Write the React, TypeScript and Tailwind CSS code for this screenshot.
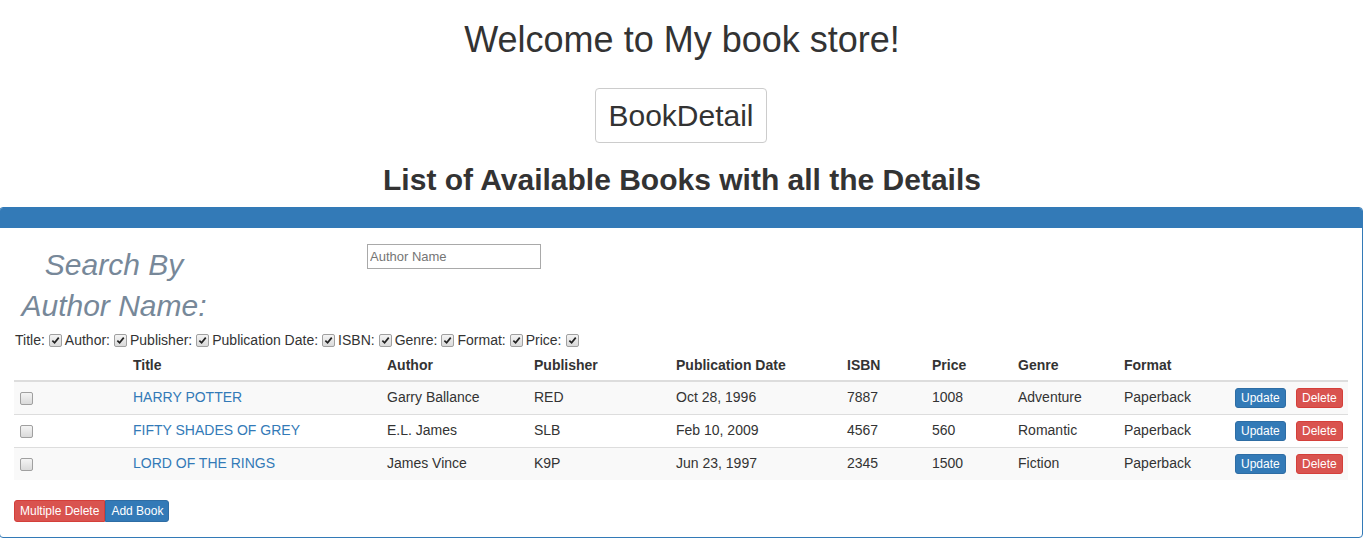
import React from 'react';

type Book = {
  title: string;
  author: string;
  publisher: string;
  date: string;
  isbn: string;
  price: string;
  genre: string;
  format: string;
};

const books: Book[] = [
  { title: 'HARRY POTTER', author: 'Garry Ballance', publisher: 'RED', date: 'Oct 28, 1996', isbn: '7887', price: '1008', genre: 'Adventure', format: 'Paperback' },
  { title: 'FIFTY SHADES OF GREY', author: 'E.L. James', publisher: 'SLB', date: 'Feb 10, 2009', isbn: '4567', price: '560', genre: 'Romantic', format: 'Paperback' },
  { title: 'LORD OF THE RINGS', author: 'James Vince', publisher: 'K9P', date: 'Jun 23, 1997', isbn: '2345', price: '1500', genre: 'Fiction', format: 'Paperback' },
];

const toggles = ['Title', 'Author', 'Publisher', 'Publication Date', 'ISBN', 'Genre', 'Format', 'Price'];
const headers = ['Title', 'Author', 'Publisher', 'Publication Date', 'ISBN', 'Price', 'Genre', 'Format'];

const Box: React.FC<{ checked?: boolean; className?: string }> = ({ checked, className }) => (
  <span className={"inline-flex shrink-0 items-center justify-center w-[13px] h-[13px] border border-[#a0a0a0] rounded-[2px] bg-gradient-to-b from-[#f4f4f4] to-[#dadada] " + (className || '')}>
    {checked && (
      <svg viewBox="0 0 10 10" className="w-[9px] h-[9px]">
        <path d="M1.5 5.2 L4 7.6 L8.6 1.8" fill="none" stroke="#222" strokeWidth="1.9" />
      </svg>
    )}
  </span>
);

const App: React.FC = () => {
  return (
    <div className="min-h-[545px] bg-white text-[#333] text-[14px] leading-[20px] font-['Liberation_Sans',Arial,sans-serif]">
      <h1 className="pt-[20px] text-center text-[36px] leading-[40px]">Welcome to My book store!</h1>

      <div className="flex justify-center mt-[28px]">
        <button className="h-[55px] px-[12px] border border-[#ccc] rounded-[4px] bg-white text-[30px] leading-[33px] -translate-x-px">
          BookDetail
        </button>
      </div>

      <h2 className="mt-[20px] text-center text-[30px] leading-[33px] font-bold">
        List of Available Books with all the Details
      </h2>

      <div className="mt-[11px] -ml-px w-[1364px] border border-[#337ab7] rounded-[4px]">
        <div className="h-[20px] bg-[#337ab7] rounded-t-[3px]" />

        <div className="px-[14px] pt-[15px] pb-[15px]">
          <div className="flex items-start">
            <div className="w-[200px] pt-px text-center italic text-[30px] leading-[41px] text-[#778899]">
              Search By
              <br />
              Author Name:
            </div>
            <input
              placeholder="Author Name"
              className="ml-[153px] mt-px w-[174px] h-[25px] border border-[#a9a9a9] px-[2px] text-[13px] placeholder:text-[#757575] outline-none"
            />
          </div>

          <div className="mt-[4px] h-[20px] flex items-center whitespace-nowrap">
            {toggles.map((t, i) => (
              <React.Fragment key={t}>
                <span className={i === 0 ? 'pl-px' : ''}>{t}:</span>
                <Box checked className="ml-[4px] mr-[3px]" />
              </React.Fragment>
            ))}
          </div>

          <table className="w-[1334px] table-fixed border-collapse">
            <colgroup>
              <col className="w-[111px]" />
              <col className="w-[254px]" />
              <col className="w-[147px]" />
              <col className="w-[142px]" />
              <col className="w-[171px]" />
              <col className="w-[85px]" />
              <col className="w-[86px]" />
              <col className="w-[106px]" />
              <col className="w-[111px]" />
              <col className="w-[61px]" />
              <col className="w-[60px]" />
            </colgroup>
            <thead>
              <tr className="border-b-2 border-[#ddd]">
                <th className="py-[5px]" />
                {headers.map(c => (
                  <th key={c} className="px-2 py-[5px] text-left font-bold">{c}</th>
                ))}
                <th />
                <th />
              </tr>
            </thead>
            <tbody>
              {books.map((b, i) => (
                <tr key={b.title} className={(i % 2 === 0 ? 'bg-[#f9f9f9] ' : 'bg-white ') + (i > 0 ? 'border-t border-[#ddd]' : '')}>
                  <td className="pl-[6px] py-[6px]"><Box className="align-[-2px]" /></td>
                  <td className="px-2 pt-[5px] pb-[7px]"><a className="text-[#337ab7]" href="#">{b.title}</a></td>
                  <td className="px-2 pt-[5px] pb-[7px]">{b.author}</td>
                  <td className="px-2 pt-[5px] pb-[7px]">{b.publisher}</td>
                  <td className="px-2 pt-[5px] pb-[7px]">{b.date}</td>
                  <td className="px-2 pt-[5px] pb-[7px]">{b.isbn}</td>
                  <td className="px-2 pt-[5px] pb-[7px]">{b.price}</td>
                  <td className="px-2 pt-[5px] pb-[7px]">{b.genre}</td>
                  <td className="px-2 pt-[5px] pb-[7px]">{b.format}</td>
                  <td className="px-2 py-[6px]">
                    <button className="block h-[20px] px-[5px] text-[12px] leading-[18px] text-white bg-[#337ab7] border border-[#2e6da4] rounded-[3px]">Update</button>
                  </td>
                  <td className="pl-2 py-[6px]">
                    <button className="block h-[20px] px-[5px] text-[12px] leading-[18px] text-white bg-[#d9534f] border border-[#d43f3a] rounded-[3px]">Delete</button>
                  </td>
                </tr>
              ))}
            </tbody>
          </table>

          <div className="mt-[20px] flex">
            <button className="h-[22px] px-[5px] text-[12px] leading-[18px] text-white bg-[#d9534f] border border-[#d43f3a] rounded-l-[3px]">Multiple Delete</button>
            <button className="h-[22px] px-[5px] text-[12px] leading-[18px] text-white bg-[#337ab7] border border-[#2e6da4] rounded-r-[3px]">Add Book</button>
          </div>
        </div>
      </div>
    </div>
  );
};

export default App;
